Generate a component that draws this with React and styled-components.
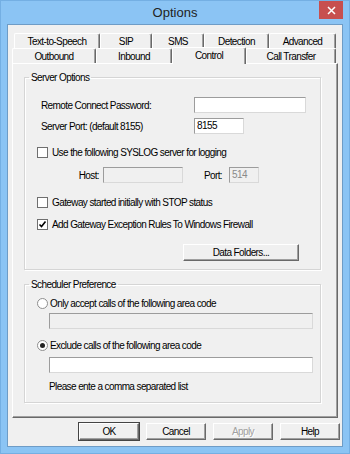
import styled, { createGlobalStyle } from "styled-components";

const uiFont = `"Liberation Sans", Arial, sans-serif`;

const GlobalStyle = createGlobalStyle`
  html, body {
    margin: 0;
    padding: 0;
    background: #8bc4f4;
  }
  body {
    font-family: ${uiFont};
    font-size: 10px;
    letter-spacing: -0.6px;
    color: #000;
  }
  * {
    box-sizing: border-box;
  }
`;

const Frame = styled.div`
  width: 350px;
  height: 454px;
  background: #8bc4f4;
  border: 1px solid #74afe3;
  display: flex;
  flex-direction: column;
  padding: 0 6px 6px;
`;

const TitleBar = styled.div`
  height: 23px;
  display: grid;
  grid-template-columns: 1fr auto 1fr;
  align-items: start;
`;

const Title = styled.div`
  grid-column: 2;
  font-size: 13px;
  letter-spacing: 0;
  line-height: 23px;
  color: #222;
`;

const CloseButton = styled.div`
  grid-column: 3;
  justify-self: end;
  width: 24px;
  height: 18px;
  background: #c74f4f;
  display: flex;
  align-items: center;
  justify-content: center;
`;

const Client = styled.div`
  flex: 1;
  background: #f0f0f0;
  border: 1px solid #6e9cc6;
  padding: 8px 4px 0;
  display: flex;
  flex-direction: column;
`;

const TabRow = styled.div`
  display: flex;
  align-items: flex-end;
  height: 15px;
  padding-left: ${(p) => p.$indent || 0}px;
`;

const Tab = styled.div`
  width: ${(p) => p.$w}px;
  height: ${(p) => (p.$active ? 17 : 15)}px;
  margin-bottom: ${(p) => (p.$active ? -1 : 0)}px;
  position: ${(p) => (p.$active ? "relative" : "static")};
  z-index: ${(p) => (p.$active ? 2 : 0)};
  display: flex;
  align-items: center;
  justify-content: center;
  padding-bottom: ${(p) => (p.$active ? 2 : 0)}px;
  background: #f0f0f0;
  border-top: 1px solid #fff;
  border-left: 1px solid #fff;
  border-right: 1px solid #696969;
  box-shadow: inset -1px 0 #a0a0a0;
  border-radius: 2px 2px 0 0;
  white-space: nowrap;
`;

const Panel = styled.div`
  height: 355px;
  background: #f0f0f0;
  border-top: 1px solid #fff;
  border-left: 1px solid #fff;
  border-right: 1px solid #696969;
  border-bottom: 1px solid #696969;
  box-shadow: inset -1px -1px #a0a0a0;
  padding: 7px 16px 0 11px;
`;

const Group = styled.fieldset`
  margin: ${(p) => p.$mt || 0}px 0 0;
  padding: 0 0 ${(p) => p.$pb}px;
  border: 1px solid #d5d5d5;
  box-shadow: inset 1px 1px #fff, 1px 1px #fff;
  min-width: 0;
`;

const Legend = styled.legend`
  margin-left: 4px;
  padding: 0 2px;
  line-height: 13px;
`;

const Row = styled.div`
  display: flex;
  align-items: center;
  height: ${(p) => p.$h || 13}px;
  margin-top: ${(p) => p.$mt}px;
  margin-left: ${(p) => p.$ml || 0}px;
  gap: ${(p) => p.$gap || 0}px;
`;

const FieldLabel = styled.span`
  width: ${(p) => p.$w}px;
  text-align: ${(p) => p.$align || "left"};
  white-space: nowrap;
`;

const Input = styled.div`
  width: ${(p) => p.$w}px;
  height: 16px;
  background: ${(p) => (p.$disabled ? "#f0f0f0" : "#fff")};
  border: 1px solid;
  border-color: #9c9c9c #d9d9d9 #d9d9d9 #9c9c9c;
  color: ${(p) => (p.$disabled ? "#8a8a8a" : "#000")};
  padding: 0 2px;
  line-height: 14px;
  margin-left: ${(p) => p.$ml || 0}px;
`;

const Box = styled.span`
  width: 11px;
  height: 11px;
  background: #fff;
  border: 1px solid #6f6f6f;
  display: inline-flex;
  align-items: center;
  justify-content: center;
  flex: none;
`;

const Radio = styled.span`
  width: 11px;
  height: 11px;
  border-radius: 50%;
  background: #fff;
  border: 1px solid #8e8e8e;
  display: inline-flex;
  align-items: center;
  justify-content: center;
  flex: none;
  &::after {
    content: "";
    width: 5px;
    height: 5px;
    border-radius: 50%;
    background: ${(p) => (p.$checked ? "#222" : "transparent")};
  }
`;

const ButtonRow = styled.div`
  display: flex;
  justify-content: flex-end;
  gap: ${(p) => p.$gap}px;
  margin-top: ${(p) => p.$mt}px;
  margin-right: ${(p) => p.$mr}px;
`;

const Button = styled.div`
  width: ${(p) => p.$w}px;
  height: 17px;
  display: flex;
  align-items: center;
  justify-content: center;
  background: #f0f0f0;
  border-top: 1px solid #fff;
  border-left: 1px solid #fff;
  border-right: 1px solid #696969;
  border-bottom: 1px solid #696969;
  box-shadow: inset -1px -1px #a0a0a0;
  outline: ${(p) => (p.$default ? "1px solid #444" : "none")};
  color: ${(p) => (p.$disabled ? "#a0a0a0" : "#000")};
  text-shadow: ${(p) => (p.$disabled ? "1px 1px #fff" : "none")};
`;

function CheckBox({ checked, label }) {
  return (
    <>
      <Box>
        {checked && (
          <svg width="9" height="9" viewBox="0 0 9 9">
            <path d="M1.5 4.5 L3.5 6.5 L7.5 1.5" fill="none" stroke="#000" strokeWidth="1.6" />
          </svg>
        )}
      </Box>
      <span>{label}</span>
    </>
  );
}

const topTabs = [
  ["Text-to-Speech", 86],
  ["SIP", 52],
  ["SMS", 52],
  ["Detection", 65],
  ["Advanced", 67],
];

const frontTabs = [
  ["Outbound", 84],
  ["Inbound", 76],
  ["Control", 74],
  ["Call Transfer", 90],
];

export default function App() {
  return (
    <>
      <GlobalStyle />
      <Frame>
        <TitleBar>
          <Title>Options</Title>
          <CloseButton>
            <svg width="9" height="9" viewBox="0 0 9 9">
              <path d="M1 1 L8 8 M8 1 L1 8" stroke="#fff" strokeWidth="1.5" />
            </svg>
          </CloseButton>
        </TitleBar>
        <Client>
          <TabRow $indent={2}>
            {topTabs.map(([name, w]) => (
              <Tab key={name} $w={w}>
                {name}
              </Tab>
            ))}
          </TabRow>
          <TabRow>
            {frontTabs.map(([name, w]) => (
              <Tab key={name} $w={w} $active={name === "Control"}>
                {name}
              </Tab>
            ))}
          </TabRow>
          <Panel>
            <Group $pb={8}>
              <Legend>Server Options</Legend>
              <Row $h={16} $mt={13} $ml={16}>
                <FieldLabel $w={153}>Remote Connect Password:</FieldLabel>
                <Input $w={112} />
              </Row>
              <Row $h={16} $mt={5} $ml={16}>
                <FieldLabel $w={153}>Server Port: (default 8155)</FieldLabel>
                <Input $w={50}>8155</Input>
              </Row>
              <Row $mt={12} $ml={12} $gap={4}>
                <CheckBox label="Use the following SYSLOG server for logging" />
              </Row>
              <Row $h={16} $mt={8}>
                <FieldLabel $w={74} $align="right">
                  Host:
                </FieldLabel>
                <Input $w={80} $ml={4} $disabled />
                <FieldLabel $w={39} $align="right">
                  Port:
                </FieldLabel>
                <Input $w={30} $ml={7} $disabled>
                  514
                </Input>
              </Row>
              <Row $mt={13} $ml={12} $gap={4}>
                <CheckBox label="Gateway started initially with STOP status" />
              </Row>
              <Row $mt={9} $ml={12} $gap={4}>
                <CheckBox checked label="Add Gateway Exception Rules To Windows Firewall" />
              </Row>
              <ButtonRow $mt={13} $mr={21} $gap={0}>
                <Button $w={116}>Data Folders...</Button>
              </ButtonRow>
            </Group>
            <Group $mt={8} $pb={9}>
              <Legend>Scheduler Preference</Legend>
              <Row $mt={6} $ml={12} $gap={2}>
                <Radio />
                <span>Only accept calls of the following area code</span>
              </Row>
              <Row $h={16} $mt={3} $ml={24}>
                <Input $w={264} $disabled />
              </Row>
              <Row $mt={10} $ml={12} $gap={2}>
                <Radio $checked />
                <span>Exclude calls of the following area code</span>
              </Row>
              <Row $h={16} $mt={5} $ml={24}>
                <Input $w={264} />
              </Row>
              <Row $mt={7} $ml={24}>
                <span>Please ente a comma separated list</span>
              </Row>
            </Group>
          </Panel>
          <ButtonRow $mt={5} $mr={-2} $gap={7}>
            <Button $w={60} $default>
              OK
            </Button>
            <Button $w={60}>Cancel</Button>
            <Button $w={60} $disabled>
              Apply
            </Button>
            <Button $w={60}>Help</Button>
          </ButtonRow>
        </Client>
      </Frame>
    </>
  );
}
